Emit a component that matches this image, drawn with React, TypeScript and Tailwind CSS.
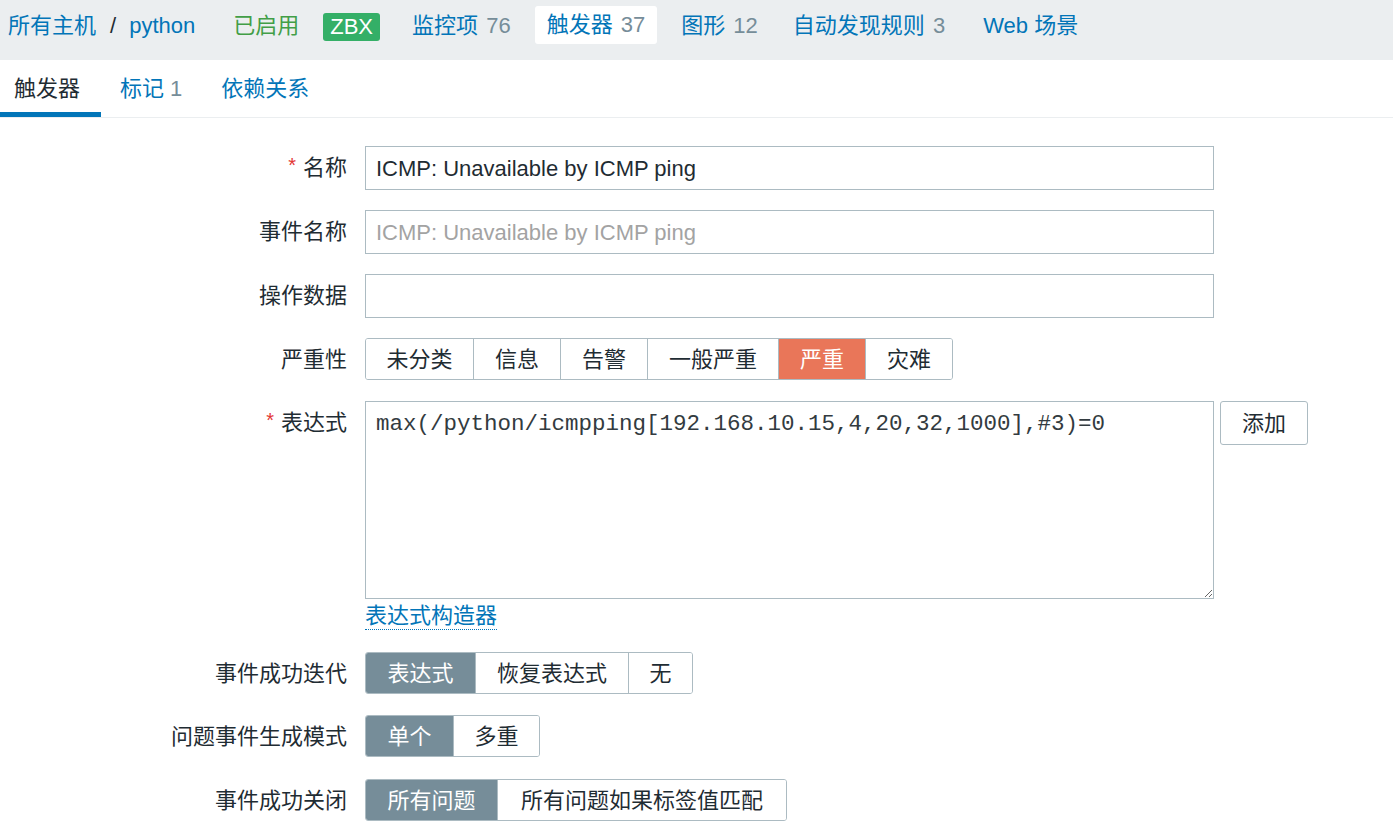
import React from 'react';

const font = { fontFamily: '"Liberation Sans", Arial, "Noto Sans CJK SC", sans-serif' };

function Segmented({ items, active, activeClass }: { items: { label: string; w: string }[]; active: number; activeClass: string }) {
  return (
    <div className="flex border border-[#acbbc2] rounded-[3px] overflow-hidden h-[42px]">
      {items.map((it, i) => (
        <div
          key={it.label}
          className={`${it.w} flex items-center justify-center ${i > 0 ? 'border-l border-[#acbbc2]' : ''} ${
            i === active ? activeClass : 'bg-white text-[#1f2c33]'
          }`}
        >
          {it.label}
        </div>
      ))}
    </div>
  );
}

function Label({ text, required }: { text: string; required?: boolean }) {
  return (
    <div className="w-[347px] shrink-0 text-right text-[#1f2c33] h-[44px] leading-[44px]">
      {required && <span className="text-[#e33734] text-[20px] relative -top-[3px] mr-[7px]">*</span>}
      {text}
    </div>
  );
}

export default function App() {
  return (
    <div className="w-[1393px] h-[836px] bg-white text-[22px] text-[#1f2c33] overflow-hidden" style={font}>
      {/* host navigation */}
      <div className="h-[60px] bg-[#ebeef0] flex items-center pb-[10px] whitespace-nowrap">
        <span className="ml-[8px] text-[#0275b8]">所有主机</span>
        <span className="ml-[14px] text-[#1f2c33]">/</span>
        <span className="ml-[13px] text-[#0275b8]">python</span>
        <span className="ml-[38px] text-[#429e47]">已启用</span>
        <span className="ml-[24px] mt-[4px] bg-[#34af67] text-white rounded-[3px] h-[28px] leading-[28px] px-[7px] text-[22px]">ZBX</span>
        <span className="ml-[32px] text-[#0275b8]">
          监控项 <span className="ml-[2px] text-[#768d99]">76</span>
        </span>
        <span className="ml-[24px] bg-white rounded-[3px] h-[38px] leading-[38px] px-[12px] text-[#0275b8]">
          触发器 <span className="ml-[2px] text-[#768d99]">37</span>
        </span>
        <span className="ml-[24px] text-[#0275b8]">
          图形 <span className="ml-[2px] text-[#768d99]">12</span>
        </span>
        <span className="ml-[35px] text-[#0275b8]">
          自动发现规则 <span className="ml-[2px] text-[#768d99]">3</span>
        </span>
        <span className="ml-[38px] text-[#0275b8]">Web 场景</span>
      </div>

      {/* tabs */}
      <div className="h-[58px] flex items-stretch border-b border-[#ebeef0] whitespace-nowrap">
        <div className="w-[101px] pl-[14px] flex items-center border-b-[5px] border-[#0275b8] pt-[5px] text-[#1f2c33]">触发器</div>
        <div className="ml-[19px] flex items-center text-[#0275b8]">
          标记 <span className="ml-[6px] text-[#768d99]">1</span>
        </div>
        <div className="ml-[39px] flex items-center text-[#0275b8]">依赖关系</div>
      </div>

      {/* form */}
      <div className="pt-[28px] flex flex-col">
        <div className="flex gap-[18px]">
          <Label text="名称" required />
          <div className="w-[849px] h-[44px] border border-[#acbbc2] px-[10px] flex items-center">ICMP: Unavailable by ICMP ping</div>
        </div>
        <div className="flex gap-[18px] mt-[20px]">
          <Label text="事件名称" />
          <div className="w-[849px] h-[44px] border border-[#acbbc2] px-[10px] flex items-center text-[#a3a3a3]">ICMP: Unavailable by ICMP ping</div>
        </div>
        <div className="flex gap-[18px] mt-[20px]">
          <Label text="操作数据" />
          <div className="w-[849px] h-[44px] border border-[#acbbc2]"></div>
        </div>
        <div className="flex gap-[18px] mt-[20px] items-center">
          <div className="w-[347px] shrink-0 text-right">严重性</div>
          <Segmented
            active={4}
            activeClass="bg-[#e97659] text-white"
            items={[
              { label: '未分类', w: 'w-[107px]' },
              { label: '信息', w: 'w-[87px]' },
              { label: '告警', w: 'w-[87px]' },
              { label: '一般严重', w: 'w-[131px]' },
              { label: '严重', w: 'w-[87px]' },
              { label: '灾难', w: 'w-[87px]' },
            ]}
          />
        </div>
        <div className="flex gap-[18px] mt-[21px] items-start">
          <Label text="表达式" required />
          <div className="flex flex-col">
            <textarea
              readOnly
              defaultValue="max(/python/icmpping[192.168.10.15,4,20,32,1000],#3)=0"
              className="w-[849px] h-[198px] border border-[#acbbc2] px-[10px] py-[6px] text-[22.5px] leading-[32px] text-[#333b40] outline-none"
              style={{ fontFamily: '"Courier New", "Liberation Mono", monospace' }}
            />
            <a className="mt-[4px] self-start text-[#0275b8] border-b border-dotted border-[#0275b8] leading-[26px]">表达式构造器</a>
          </div>
          <button className="ml-[-12px] w-[88px] h-[44px] border border-[#acbbc2] rounded-[3px] bg-white text-[#1f2c33]">添加</button>
        </div>
        <div className="flex gap-[18px] mt-[22px] items-center">
          <div className="w-[347px] shrink-0 text-right">事件成功迭代</div>
          <Segmented
            active={0}
            activeClass="bg-[#768d99] text-white"
            items={[
              { label: '表达式', w: 'w-[109px]' },
              { label: '恢复表达式', w: 'w-[153px]' },
              { label: '无', w: 'w-[64px]' },
            ]}
          />
        </div>
        <div className="flex gap-[18px] mt-[21px] items-center">
          <div className="w-[347px] shrink-0 text-right">问题事件生成模式</div>
          <Segmented
            active={0}
            activeClass="bg-[#768d99] text-white"
            items={[
              { label: '单个', w: 'w-[87px]' },
              { label: '多重', w: 'w-[86px]' },
            ]}
          />
        </div>
        <div className="flex gap-[18px] mt-[22px] items-center">
          <div className="w-[347px] shrink-0 text-right">事件成功关闭</div>
          <Segmented
            active={0}
            activeClass="bg-[#768d99] text-white"
            items={[
              { label: '所有问题', w: 'w-[131px]' },
              { label: '所有问题如果标签值匹配', w: 'w-[289px]' },
            ]}
          />
        </div>
      </div>
    </div>
  );
}
